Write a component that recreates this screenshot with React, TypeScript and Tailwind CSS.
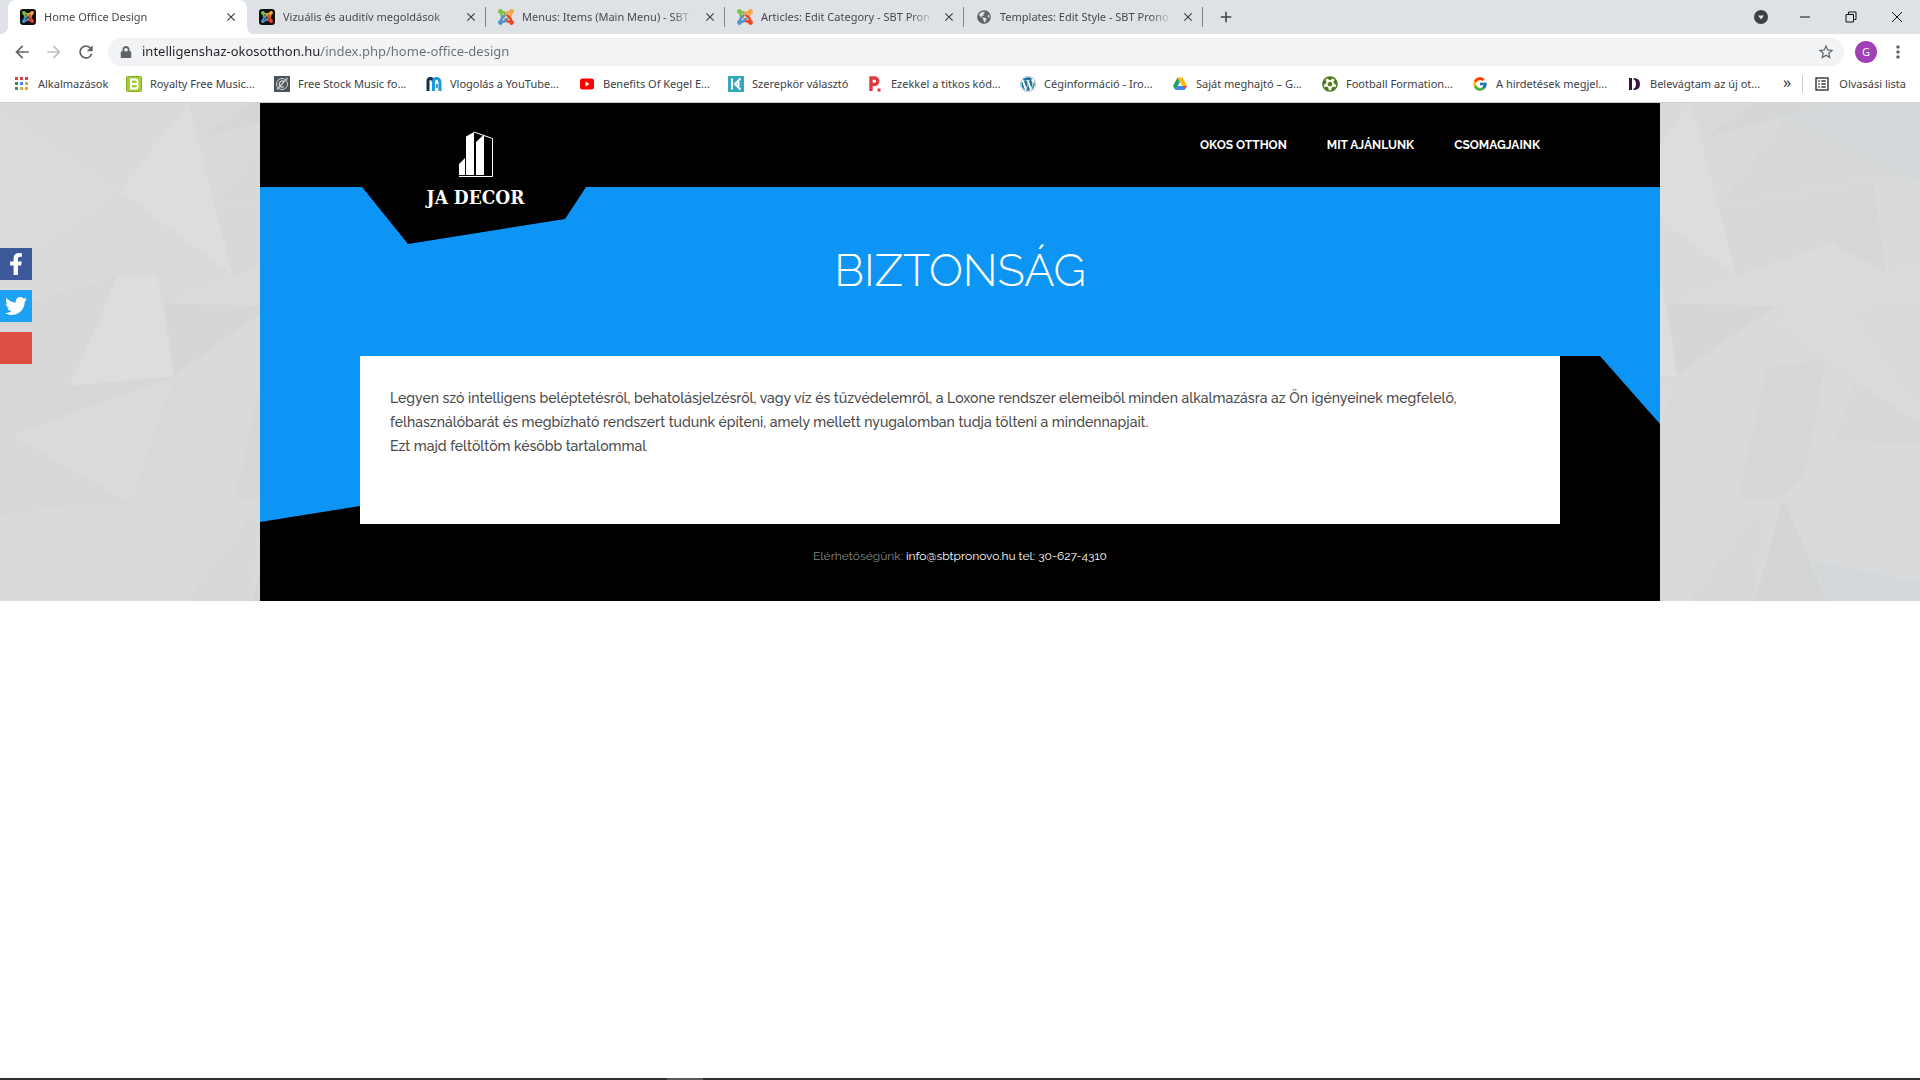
import { ReactNode } from "react"
import { FaFacebookF, FaTwitter, FaWordpress, FaFutbol, FaLock, FaGlobeAmericas } from "react-icons/fa"
import { FcGoogle } from "react-icons/fc"
import { MdArrowBack, MdArrowForward, MdRefresh, MdStarBorder, MdMoreVert, MdOutlineListAlt, MdAdd, MdClose } from "react-icons/md"

const JoomlaMark = () => (
  <g fill="none" strokeWidth="2.4" strokeLinecap="round" strokeLinejoin="round">
    <path d="M9.500 6.500 6.800 3.800Q4.500 2 3.500 5L3.500 6.500 5.500 8.500" stroke="#7ac143" />
    <path d="M6.500 6.500 9.200 3.800Q11.500 2 12.500 5L12.500 6.500 10.500 8.500" stroke="#f9a541" />
    <path d="M9.500 6.500 12.200 9.200Q14 12 11 12.500L9.500 12.500 7.500 10.500" stroke="#f44321" />
    <path d="M6.500 6.500 3.800 9.200Q2 12 5 12.500L6.500 12.500 9 10" stroke="#5091cd" />
    <circle cx="2.500" cy="2.500" r="1.200" stroke="#7ac143" />
    <circle cx="13.500" cy="2.500" r="1.200" stroke="#f9a541" />
    <circle cx="13.500" cy="13.500" r="1.200" stroke="#f44321" />
    <circle cx="2.500" cy="13.500" r="1.200" stroke="#5091cd" />
  </g>
)

const JoomlaIcon = () => (
  <svg className="size-4 shrink-0" viewBox="0 0 16 16"><JoomlaMark /></svg>
)

const JoomlaDarkIcon = () => (
  <svg className="size-4 shrink-0" viewBox="0 0 16 16">
    <rect width="16" height="16" rx="3" fill="#111" />
    <g transform="translate(2 2) scale(.75)"><JoomlaMark /></g>
  </svg>
)

const AppsIcon = () => (
  <svg className="size-4 shrink-0" viewBox="0 0 16 16">
    {["#d9453a", "#c8413b", "#d9453a", "#3d8f5f", "#4285f4", "#d9a441", "#3d8f5f", "#d9a441", "#e0a93a"].map((color, i) => (
      <rect key={i} x={1 + (i % 3) * 5} y={1 + Math.floor(i / 3) * 5} width="3" height="3" fill={color} />
    ))}
  </svg>
)

const BensoundIcon = () => (
  <svg className="size-4 shrink-0" viewBox="0 0 16 16">
    <rect x=".5" y=".5" width="15" height="15" rx="1" fill="#a4cf3c" stroke="#84ae1c" />
    <path d="M5 3.500h4.500a2.200 2.200 0 0 1 .6 4.300 2.400 2.400 0 0 1-.4 4.700H5zM5 8h5" fill="none" stroke="#fff" strokeWidth="1.800" />
  </svg>
)

const StockIcon = () => (
  <svg className="size-4 shrink-0" viewBox="0 0 16 16">
    <rect width="16" height="16" fill="#4b5358" />
    <circle cx="8" cy="8" r="5.500" fill="none" stroke="#cfd4d6" />
    <path d="M10.500 6A3 3 0 1 0 10 10.500M3 13.500 13.500 2" fill="none" stroke="#cfd4d6" strokeWidth="1.200" />
  </svg>
)

const MaIcon = () => (
  <svg className="size-4 shrink-0" viewBox="0 0 16 16" fill="none" strokeWidth="3">
    <path d="M2 15V5Q2 2.500 4.500 2.500T7.500 6v6" stroke="#0f2f57" />
    <path d="M7.500 15V6Q7.500 2.500 10.500 2.500T14 6v9" stroke="#1f9ad6" />
    <path d="M10.800 8v4" stroke="#1f9ad6" strokeWidth="2" />
  </svg>
)

const YoutubeIcon = () => (
  <svg className="size-4 shrink-0" viewBox="0 0 16 16">
    <rect x="1" y="2.500" width="14" height="11" rx="2.500" fill="#f00" />
    <path d="m6.500 5.500 4 2.500-4 2.500z" fill="#fff" />
  </svg>
)

const KIcon = () => (
  <svg className="size-4 shrink-0" viewBox="0 0 16 16">
    <rect width="16" height="16" fill="#35a7bd" />
    <path d="M4 2.500v11M12.500 2.500 7 8l5.500 5.500M10.500 6v4" fill="none" stroke="#fff" strokeWidth="2" />
  </svg>
)

const PIcon = () => (
  <svg className="size-4 shrink-0" viewBox="0 0 16 16">
    <path d="M4 15V2h3.500a3.200 3.200 0 0 1 0 6.500H4" fill="none" stroke="#dd3b3f" strokeWidth="3.400" />
    <rect x="10.500" y="12.500" width="3" height="3" fill="#dd3b3f" />
  </svg>
)

const DriveIcon = () => (
  <svg className="size-4 shrink-0" viewBox="0 0 16 16">
    <path d="M5.500 1.500 1 10l2.500 4L8 6z" fill="#1fa463" />
    <path d="M5.500 1.500h5L15 10h-4.500z" fill="#fbbc05" />
    <path d="M5.500 10H15l-2.500 4h-9z" fill="#4285f4" />
    <path d="M10.500 10H15l-1.500 2.500z" fill="#ea4335" />
  </svg>
)

const DIcon = () => (
  <svg className="size-4 shrink-0" viewBox="0 0 16 16">
    <path d="M3 2h3v12H3zM7.500 2Q14 2 14 8t-6.500 6v-1.500Q10 12 10 8T7.500 3.500z" fill="#3b1146" />
  </svg>
)

const BuildingLogo = () => (
  <svg className="h-[46px] w-[36px]" viewBox="457 131 36 46" fill="#fff">
    <path d="M458 164l6-6v17h-6zM465 136.500l8-4.500v43h-8zM475 142l8-7.500V175h-8z" />
    <path d="M473 132l18.500 6.500v38h-33.500" fill="none" stroke="#fff" />
  </svg>
)

// [points, fill] of the facets in one wallpaper tile
const FACETS = [
  ["188,0 233,173 120,88", "#dcdfde"],
  ["0,8 120,88 0,170", "#dbdddc"],
  ["188,0 250,0 203,35", "#d7d9dc"],
  ["202,35 250,0 330,0 282,14", "#d3d6d4"],
  ["200,36 282,14 216,103", "#d8dadd"],
  ["282,14 216,103 370,76 400,72", "#d6d9d8"],
  ["282,14 330,0 417,0 417,80 400,72", "#d5d7da"],
  ["216,104 370,78 329,140 233,173", "#d6d8db"],
  ["370,78 383,170 329,140", "#d4d7d5"],
  ["373,78 400,72 417,84 417,158 383,170", "#d9dcdb"],
  ["233,173 329,140 383,170 417,158 417,200 345,205 163,200", "#dadddb"],
  ["150,112 233,173 163,200", "#d8dbda"],
  ["164,200 272,203 174,272", "#d3d6d4"],
  ["118,172 157,172 174,273 70,283", "#dcdfdd"],
  ["0,207 118,173 70,282 0,240", "#d6d8da"],
  ["0,235 70,283 12,332 0,345", "#d4d7d6"],
  ["70,283 174,273 12,332", "#d5d7d6"],
  ["12,332 174,275 130,400", "#dadbdd"],
  ["174,275 130,400 232,400", "#d8d9dc"],
  ["12,332 130,400 70,403 0,413 0,345", "#d7d9d8"],
  ["0,413 70,403 185,498 0,498", "#dadcdb"],
  ["260,400 252,498 185,498", "#d6d8db"],
  ["272,216 345,205 417,310 417,320 323,253", "#dbdddc"],
  ["272,216 323,253 262,267", "#d9dcdb"],
  ["264,265 323,255 302,372 280,395 235,395", "#d5d8d6"],
  ["323,255 352,275 330,345 302,372", "#d8dadd"],
  ["352,278 417,320 417,340 330,345", "#d6d9d7"],
  ["330,345 417,340 417,396 280,395 305,372", "#dadcdb"],
  ["280,396 417,396 417,480 310,458", "#d8dadc"],
  ["280,396 325,498 252,498", "#d2d5d3"],
  ["310,458 417,480 417,498 325,498", "#d5d7db"],
]

const Wallpaper = () => (
  <svg className="absolute inset-0 size-full opacity-75" aria-hidden="true">
    <pattern id="facets" width="1503" height="498" patternUnits="userSpaceOnUse">
      {FACETS.map(([points, fill]) => (
        <polygon key={points} points={points} fill={fill} />
      ))}
    </pattern>
    <rect width="100%" height="100%" fill="url(#facets)" />
  </svg>
)

const TABS: { title: string; icon: ReactNode; active?: boolean }[] = [
  { title: "Home Office Design", icon: <JoomlaDarkIcon />, active: true },
  { title: "Vizuális és auditív megoldások", icon: <JoomlaDarkIcon /> },
  { title: "Menus: Items (Main Menu) - SBT", icon: <JoomlaIcon /> },
  { title: "Articles: Edit Category - SBT Pron", icon: <JoomlaIcon /> },
  { title: "Templates: Edit Style - SBT Prono", icon: <FaGlobeAmericas className="size-4 shrink-0 p-px text-[#5f6368]" /> },
]

const BOOKMARKS: { title: string; icon: ReactNode; width: string }[] = [
  { title: "Alkalmazások", icon: <AppsIcon />, width: "w-[112px]" },
  { title: "Royalty Free Music...", icon: <BensoundIcon />, width: "w-[148px]" },
  { title: "Free Stock Music fo...", icon: <StockIcon />, width: "w-[152px]" },
  { title: "Vlogolás a YouTube...", icon: <MaIcon />, width: "w-[153px]" },
  { title: "Benefits Of Kegel E...", icon: <YoutubeIcon />, width: "w-[149px]" },
  { title: "Szerepkör választó", icon: <KIcon />, width: "w-[139px]" },
  { title: "Ezekkel a titkos kód...", icon: <PIcon />, width: "w-[153px]" },
  { title: "Céginformáció - Iro...", icon: <FaWordpress className="size-4 shrink-0 text-[#21759b]" />, width: "w-[152px]" },
  { title: "Saját meghajtó – G...", icon: <DriveIcon />, width: "w-[150px]" },
  { title: "Football Formation...", icon: <FaFutbol className="size-4 shrink-0 text-[#4c7a1e]" />, width: "w-[150px]" },
  { title: "A hirdetések megjel...", icon: <FcGoogle className="size-4 shrink-0" />, width: "w-[154px]" },
  { title: "Belevágtam az új ot...", icon: <DIcon />, width: "w-[153px]" },
]

const WINDOW_BUTTONS = [
  { label: "Kis méret", path: "M1 6h10" },
  { label: "Előző méret", path: "M1 3.500h7.500v7.500H1zM3.500 3.500V1H11v7.500H8.500" },
  { label: "Bezárás", path: "M1 1l10 10M11 1 1 11" },
]

const NAV = ["OKOS OTTHON", "MIT AJÁNLUNK", "CSOMAGJAINK"]

function TabStrip() {
  return (
    <div className="flex h-[34px] items-center bg-[#dee1e6] pl-2">
      {TABS.map(({ title, icon, active }) => (
        <div
          key={title}
          className={
            active
              ? "relative flex h-full w-[239px] items-center rounded-t-lg bg-white pr-2 pl-3 before:absolute before:bottom-0 before:-left-2 before:size-2 before:bg-[radial-gradient(circle_at_0_0,transparent_8px,white_8px)] after:absolute after:-right-2 after:bottom-0 after:size-2 after:bg-[radial-gradient(circle_at_100%_0,transparent_8px,white_8px)]"
              : "flex h-full w-[239px] items-center pl-3"
          }
        >
          {icon}
          <span className="ml-2 w-[172px] overflow-hidden text-[11px] whitespace-nowrap text-[#45494d] [mask-image:linear-gradient(90deg,#000_150px,transparent)]">
            {title}
          </span>
          <button className="ml-2 flex size-4 items-center justify-center text-[#3c4043]" aria-label="Lap bezárása">
            <MdClose className="size-[14px]" />
          </button>
          {!active && <span className="ml-auto h-5 w-px bg-[#808387]" />}
        </div>
      ))}
      <button className="ml-[10px] p-1 text-[#3c4043]" aria-label="Új lap"><MdAdd className="size-[18px]" /></button>
      <div className="ml-auto flex items-center">
        <button className="mr-[14px] flex size-[14px] items-center justify-center rounded-full bg-[#3c4043]" aria-label="Lapok keresése">
          <svg className="size-2" viewBox="0 0 8 8"><path d="M1 2.500h6L4 6.500z" fill="#dee1e6" /></svg>
        </button>
        {WINDOW_BUTTONS.map(({ label, path }) => (
          <button key={label} className="flex h-7 w-[46px] items-center justify-center" aria-label={label}>
            <svg className="size-3" viewBox="0 0 12 12"><path d={path} fill="none" stroke="#111" /></svg>
          </button>
        ))}
      </div>
    </div>
  )
}

function Toolbar() {
  return (
    <div className="flex h-9 items-center bg-white pl-3 text-[#5f6368]">
      <button className="mr-3" aria-label="Vissza"><MdArrowBack className="size-5" /></button>
      <button className="mr-3 text-[#bdc1c6]" aria-label="Előre"><MdArrowForward className="size-5" /></button>
      <button className="mr-3" aria-label="Frissítés"><MdRefresh className="size-5" /></button>
      <label className="flex h-7 flex-1 items-center rounded-full bg-[#f1f3f4] pr-[9px] pl-3">
        <FaLock className="size-3" />
        {/* host is dark, path is gray */}
        <input
          className="ml-[10px] flex-1 bg-[linear-gradient(90deg,#202124_179px,#6b6f74_179px)] bg-clip-text text-[13px] text-transparent outline-none"
          defaultValue="intelligenshaz-okosotthon.hu/index.php/home-office-design"
          aria-label="Cím"
        />
        <MdStarBorder className="size-[18px]" />
      </label>
      <button className="ml-[11px] size-[22px] rounded-full bg-[#a142b4] text-[11px] text-white">G</button>
      <button className="mr-3 ml-[11px]" aria-label="Menü"><MdMoreVert className="size-5" /></button>
    </div>
  )
}

function BookmarksBar() {
  return (
    <div className="flex h-[33px] items-center border-b border-[#cfcfcf] bg-white pb-1 pl-[14px] text-[11px] text-[#3c4043]">
      {BOOKMARKS.map(({ title, icon, width }) => (
        <a key={title} href="#" className={`flex items-center gap-2 whitespace-nowrap ${width}`}>
          {icon}
          {title}
        </a>
      ))}
      <button className="ml-1 pb-1 text-base leading-4" aria-label="További könyvjelzők">»</button>
      <button className="mr-[14px] ml-auto flex items-center gap-2 border-l border-[#c8cbcf] pl-[10px]">
        <MdOutlineListAlt className="size-[18px]" />
        Olvasási lista
      </button>
    </div>
  )
}

function SiteHeader() {
  return (
    <header className="flex h-[84px] justify-between bg-black pr-[120px] pl-[102px]">
      <a
        href="#"
        className="z-10 flex h-[141px] w-[224px] flex-col items-center bg-black pt-7 pl-[3px] text-white [clip-path:polygon(0_0,100%_0,100%_84px,203px_116px,46px_100%,0_84px)]"
      >
        <BuildingLogo />
        <span className="mt-2 font-['DejaVu_Serif_Condensed','DejaVu_Serif',serif] text-[19px] leading-6 font-bold">JA DECOR</span>
      </a>
      <nav className="flex items-center gap-10 text-xs font-bold text-white">
        {NAV.map(item => <a key={item} href="#">{item}</a>)}
      </nav>
    </header>
  )
}

function SocialLinks() {
  return (
    <div className="absolute top-[145px] left-0 flex flex-col gap-[10px] text-white">
      <a href="#" className="flex size-8 items-center justify-center bg-[#3b5998]" aria-label="Facebook"><FaFacebookF className="size-[22px]" /></a>
      <a href="#" className="flex size-8 items-center justify-center bg-[#1da1f2]" aria-label="Twitter"><FaTwitter className="size-[22px]" /></a>
      <a href="#" className="size-8 bg-[#dc4e41]" aria-label="Google Plus" />
    </div>
  )
}

export default function App() {
  return (
    <div className="flex min-h-screen flex-col bg-white font-['Noto_Sans',sans-serif]">
      <TabStrip />
      <Toolbar />
      <BookmarksBar />
      <div className="relative bg-[#d8dbda]">
        <Wallpaper />
        <div className="relative mx-auto max-w-[1400px] bg-black font-['Raleway','Open_Sans',sans-serif]">
          <SiteHeader />
          <h1 className="bg-[#0d95f5] pt-[54px] pb-[55px] text-center text-[45px] leading-[60px] font-light text-white">BIZTONSÁG</h1>
          <div className="flex">
            <div className="w-[100px] bg-[#0d95f5] [clip-path:polygon(0_0,100%_0,100%_calc(100%-18px),0_calc(100%-2px))]" />
            <main className="min-h-[168px] flex-1 bg-white p-[30px] text-sm leading-6 font-medium text-[#4a4a4a]">
              <p>
                Legyen szó intelligens beléptetésről, behatolásjelzésről, vagy víz és tűzvédelemről, a Loxone rendszer elemeiből minden alkalmazásra az Ön igényeinek megfelelő,
                felhasználóbarát és megbízható rendszert tudunk építeni, amely mellett nyugalomban tudja tölteni a mindennapjait.
              </p>
              <p>Ezt majd feltöltöm később tartalommal</p>
            </main>
            <div className="w-[100px] bg-[#0d95f5] [clip-path:polygon(40px_0,100%_0,100%_68px)]" />
          </div>
          <footer className="pt-5 pb-[33px] text-center text-xs leading-6 text-[#888]">
            Elérhetőségünk: <a href="#" className="text-white">info@sbtpronovo.hu tel: 30-627-4310</a>
          </footer>
        </div>
        <SocialLinks />
      </div>
      <div className="mt-auto h-[2px] bg-[#2f2e31] pl-[667px]"><div className="h-full w-9 bg-[#59585a]" /></div>
    </div>
  )
}
